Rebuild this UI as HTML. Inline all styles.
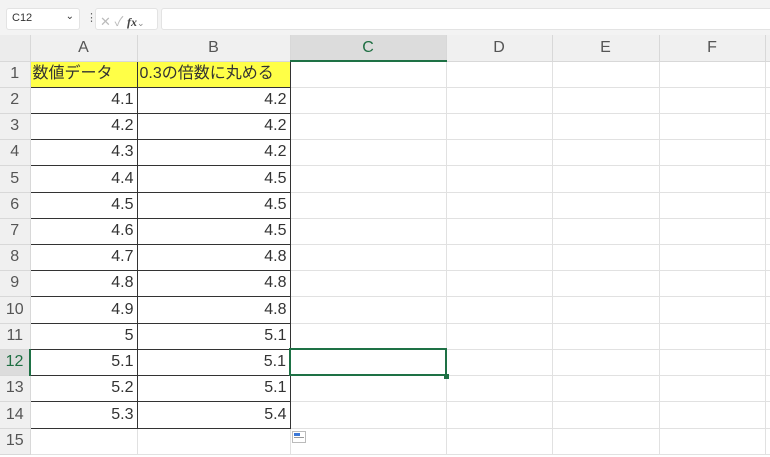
<!DOCTYPE html>
<html><head><meta charset="utf-8"><style>
*{margin:0;padding:0;box-sizing:border-box}
body{width:770px;height:457px;overflow:hidden;background:#fff;font-family:"Liberation Sans","Noto Sans CJK JP",sans-serif;position:relative}
.bar{position:absolute;left:0;top:0;width:770px;height:35px;background:#f3f3f3}
.nb{position:absolute;top:8px;height:22px;background:#fff;border:1px solid #e3e3e3;border-radius:3px;font-size:11px;color:#333}
table{position:absolute;left:0;top:35px;width:775px;border-collapse:collapse;table-layout:fixed;font-size:16px;color:#333}
td{border-right:1px solid #e1e1e1;border-bottom:1px solid #e1e1e1;height:26px;padding:0 3px;white-space:nowrap;overflow:hidden;line-height:24px}
tr.h td{height:26px;background:#f0f0f0;text-align:center;color:#555;font-size:16px;border-color:#d8d8d8}
td.r{background:#f0f0f0;text-align:center;color:#555;border-color:#d8d8d8;padding:0}
td.n{text-align:right}
td.b{border:1px solid #333}
td.y{background:#ffff47;text-align:left;padding-left:2px}
</style></head><body>
<div class="bar"></div>
<div class="nb" style="left:6px;width:74px;padding:3px 5px">C12<span style="position:absolute;right:5px;top:2px;font-size:10px">&#x2304;</span></div>
<div style="position:absolute;left:86px;top:11px;font-size:11px;color:#666">&#8942;</div>
<div class="nb" style="left:95px;width:63px;color:#bbb;padding:2px 4px;font-size:13px">✕ ✓ <i style="color:#444;font-family:'Liberation Serif',serif;font-weight:bold;font-size:12px">fx</i><span style="font-size:9px;color:#888">&#x2304;</span></div>
<div class="nb" style="left:161px;width:612px"></div>
<table>
<colgroup><col style="width:30px"><col style="width:107px"><col style="width:153px"><col style="width:156px"><col style="width:106px"><col style="width:107px"><col style="width:106px"><col style="width:10px"></colgroup>
<tr class="h"><td style="background:#ececec"></td><td>A</td><td>B</td><td style="background:#dcdcdc;color:#1e6e42;border-bottom:2px solid #1e7145">C</td><td>D</td><td>E</td><td>F</td><td></td></tr>
<tr><td class="r">1</td><td class="b y">数値データ</td><td class="b y">0.3の倍数に丸める</td><td></td><td></td><td></td><td></td><td></td></tr>
<tr><td class="r">2</td><td class="b n">4.1</td><td class="b n">4.2</td><td></td><td></td><td></td><td></td><td></td></tr>
<tr><td class="r">3</td><td class="b n">4.2</td><td class="b n">4.2</td><td></td><td></td><td></td><td></td><td></td></tr>
<tr><td class="r">4</td><td class="b n">4.3</td><td class="b n">4.2</td><td></td><td></td><td></td><td></td><td></td></tr>
<tr><td class="r" style="height:27px">5</td><td class="b n">4.4</td><td class="b n">4.5</td><td></td><td></td><td></td><td></td><td></td></tr>
<tr><td class="r">6</td><td class="b n">4.5</td><td class="b n">4.5</td><td></td><td></td><td></td><td></td><td></td></tr>
<tr><td class="r">7</td><td class="b n">4.6</td><td class="b n">4.5</td><td></td><td></td><td></td><td></td><td></td></tr>
<tr><td class="r">8</td><td class="b n">4.7</td><td class="b n">4.8</td><td></td><td></td><td></td><td></td><td></td></tr>
<tr><td class="r">9</td><td class="b n">4.8</td><td class="b n">4.8</td><td></td><td></td><td></td><td></td><td></td></tr>
<tr><td class="r" style="height:27px">10</td><td class="b n">4.9</td><td class="b n">4.8</td><td></td><td></td><td></td><td></td><td></td></tr>
<tr><td class="r">11</td><td class="b n">5</td><td class="b n">5.1</td><td></td><td></td><td></td><td></td><td></td></tr>
<tr><td class="r" style="background:#dcdcdc;color:#1e6e42;border-right:2px solid #1e7145">12</td><td class="b n">5.1</td><td class="b n">5.1</td><td style="border:2px solid #1e7145"></td><td></td><td></td><td></td><td></td></tr>
<tr><td class="r">13</td><td class="b n">5.2</td><td class="b n">5.1</td><td></td><td></td><td></td><td></td><td></td></tr>
<tr><td class="r" style="height:27px">14</td><td class="b n">5.3</td><td class="b n">5.4</td><td></td><td></td><td></td><td></td><td></td></tr>
<tr><td class="r">15</td><td></td><td></td><td></td><td></td><td></td><td></td><td></td></tr>
</table>
<div style="position:absolute;left:444px;top:374px;width:5px;height:5px;background:#1e7145"></div>
<div style="position:absolute;left:292px;top:431px;width:14px;height:12px;border:1px solid #bbb;background:#fff"><div style="position:absolute;left:1px;top:1px;width:6px;height:3px;background:#3b78d8"></div><div style="position:absolute;left:1px;top:5px;width:10px;height:1px;background:#999"></div></div>
</body></html>
